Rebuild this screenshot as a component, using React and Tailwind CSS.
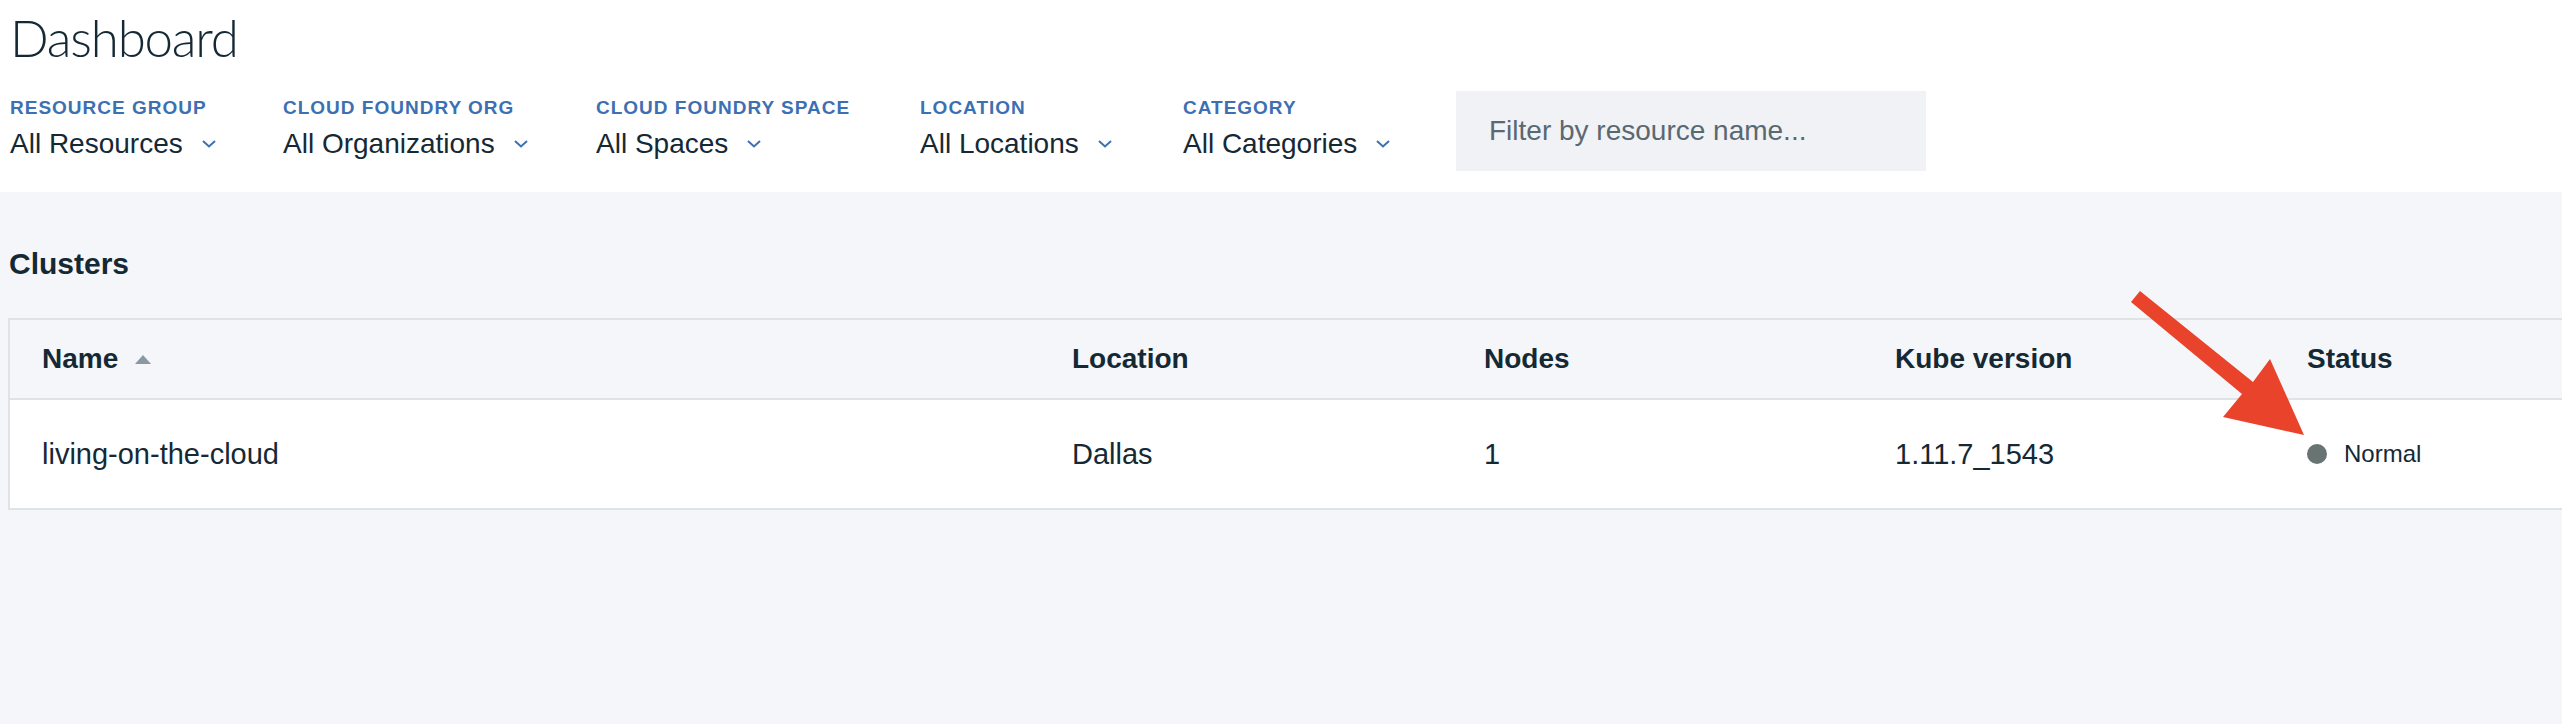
export default function App() {
  const filters = [
    { label: 'RESOURCE GROUP', value: 'All Resources', w: 'w-[273px]' },
    { label: 'CLOUD FOUNDRY ORG', value: 'All Organizations', w: 'w-[313px]' },
    { label: 'CLOUD FOUNDRY SPACE', value: 'All Spaces', w: 'w-[324px]' },
    { label: 'LOCATION', value: 'All Locations', w: 'w-[263px]' },
    { label: 'CATEGORY', value: 'All Categories', w: 'w-[273px]' },
  ];
  return (
    <div className="relative min-h-[724px] w-full overflow-hidden bg-[#f4f6f9] font-['Liberation_Sans',Arial,sans-serif] text-[#152935]">
      <header className="h-[192px] bg-white pl-[10px] pt-[12px]">
        <h1 className="font-['Lato',sans-serif] text-[51px] font-light leading-[51px] tracking-[-1.2px]">Dashboard</h1>
        <div className="mt-[28px] flex items-start">
          {filters.map((f) => (
            <div key={f.label} className={`${f.w} shrink-0 pt-[7px]`}>
              <div className="text-[19px] font-bold leading-[19px] tracking-[1px] text-[#3d70b2]">{f.label}</div>
              <div className="mt-[13px] flex items-center text-[28px] leading-[28px]">
                <span>{f.value}</span>
                <svg className="ml-[19px]" width="14" height="8" viewBox="0 0 14 8">
                  <path d="M1 1 L7 6.5 L13 1" stroke="#3d70b2" strokeWidth="2" fill="none" />
                </svg>
              </div>
            </div>
          ))}
          <div className="flex h-[80px] w-[470px] shrink-0 items-center bg-[#f0f2f5] pl-[33px] text-[28px] leading-[28px] text-[#5a6872]">
            Filter by resource name...
          </div>
        </div>
      </header>

      <section className="pl-[8px] pt-[57px]">
        <h2 className="pl-[1px] text-[30px] font-bold leading-[30px]">Clusters</h2>
        <div className="mt-[39px] border-y-2 border-l-2 border-[#dfe3e6]">
          <div className="flex h-[80px] items-center border-b-2 border-[#dfe3e6] text-[28px] font-bold leading-[28px]">
            <div className="flex w-[1030px] shrink-0 items-center pl-[32px]">
              <span>Name</span>
              <svg className="ml-[17px]" width="16" height="9" viewBox="0 0 16 9">
                <polygon points="8,0 16,9 0,9" fill="#8a98a3" />
              </svg>
            </div>
            <div className="w-[412px] shrink-0 pl-[32px]">Location</div>
            <div className="w-[411px] shrink-0 pl-[32px]">Nodes</div>
            <div className="w-[412px] shrink-0 pl-[32px]">Kube version</div>
            <div className="flex-1 pl-[32px]">Status</div>
          </div>
          <div className="flex h-[108px] items-center bg-white text-[29px] leading-[29px]">
            <div className="w-[1030px] shrink-0 pl-[32px]">living-on-the-cloud</div>
            <div className="w-[412px] shrink-0 pl-[32px]">Dallas</div>
            <div className="w-[411px] shrink-0 pl-[32px]">1</div>
            <div className="w-[412px] shrink-0 pl-[32px]">1.11.7_1543</div>
            <div className="flex flex-1 items-center pl-[32px]">
              <span className="h-[20px] w-[20px] shrink-0 rounded-full bg-[#677472]" />
              <span className="ml-[17px] text-[24px] leading-[24px]">Normal</span>
            </div>
          </div>
        </div>
      </section>

      <svg
        className="pointer-events-none absolute left-[2120px] top-[280px]"
        width="200"
        height="170"
        viewBox="2120 280 200 170"
      >
        <polygon
          points="2131,302 2140,291 2253,382 2270,359 2304,435 2223,417 2242,394"
          fill="#e9432b"
        />
      </svg>
    </div>
  );
}
